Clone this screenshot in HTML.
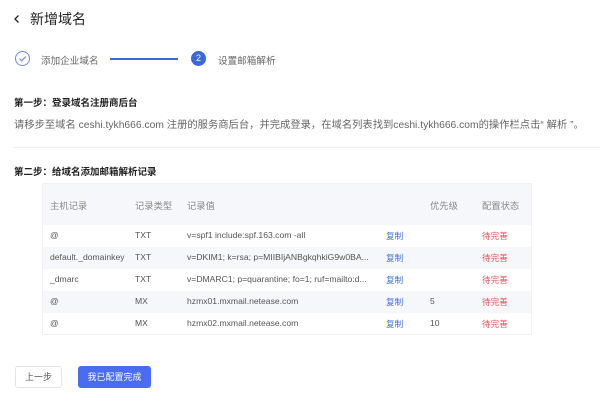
<!DOCTYPE html>
<html><head><meta charset="utf-8"><style>
*{margin:0;padding:0;box-sizing:border-box}
body{width:600px;height:400px;background:#fff;font-family:"Liberation Sans","Noto Sans CJK SC",sans-serif;color:#333;position:relative;overflow:hidden}
.a{position:absolute;white-space:nowrap}
.tb{position:absolute;left:42px;top:183px;width:490px;height:152px;border:1px solid #f0f1f4}
.row{position:absolute;left:0;width:488px;height:22px;font-size:8.6px;color:#555}
.row span{position:absolute;top:5px}
.g{background:#f6f7fa}
.cp{color:#3f6fd8}
.st{color:#e0545a}
</style></head><body>
<svg class="a" style="left:13px;top:14px" width="8" height="10"><path d="M5.5 1.5 L2 5 L5.5 8.5" fill="none" stroke="#222" stroke-width="1.3"/></svg>
<div class="a" style="left:30px;top:9px;font-size:14px;color:#222">新增域名</div>
<div class="a" style="left:15px;top:51px;width:15px;height:15px;border:1px solid #6a8ad6;border-radius:50%"></div>
<svg class="a" style="left:15px;top:51px" width="15" height="15"><path d="M4.5 7.5 L6.8 9.8 L10.8 5.5" fill="none" stroke="#6a8ad6" stroke-width="1.1"/></svg>
<div class="a" style="left:41px;top:53px;font-size:9.6px;color:#666">添加企业域名</div>
<div class="a" style="left:110px;top:58px;width:68px;height:1.5px;background:#3a66d6"></div>
<div class="a" style="left:191px;top:51px;width:15px;height:15px;background:#3a66e0;border-radius:50%;color:#fff;font-size:9px;text-align:center;line-height:15px">2</div>
<div class="a" style="left:218px;top:53px;font-size:9.6px;color:#666">设置邮箱解析</div>
<div class="a" style="left:14px;top:95px;font-size:9.5px;font-weight:bold;color:#222">第一步：登录域名注册商后台</div>
<div class="a" style="left:14px;top:116px;font-size:10.3px;color:#666">请移步至域名 ceshi.tykh666.com 注册的服务商后台，并完成登录，在域名列表找到ceshi.tykh666.com的操作栏点击“ 解析 ”。</div>
<div class="a" style="left:14px;top:147px;width:586px;height:1px;background:#eee"></div>
<div class="a" style="left:14px;top:164px;font-size:9.5px;font-weight:bold;color:#222">第二步：给域名添加邮箱解析记录</div>
<div class="tb">
<div class="row g" style="top:0;height:41px;color:#888;font-size:9.3px"><span style="left:7px;top:14px">主机记录</span><span style="left:92px;top:14px">记录类型</span><span style="left:144px;top:14px">记录值</span><span style="left:387px;top:14px">优先级</span><span style="left:439px;top:14px">配置状态</span></div>
<div class="row" style="top:41px"><span style="left:7px">@</span><span style="left:92px">TXT</span><span style="left:144px">v=spf1 include:spf.163.com -all</span><span class="cp" style="left:343px">复制</span><span class="st" style="left:439px">待完善</span></div>
<div class="row g" style="top:63px"><span style="left:7px">default._domainkey</span><span style="left:92px">TXT</span><span style="left:144px">v=DKIM1; k=rsa; p=MIIBIjANBgkqhkiG9w0BA...</span><span class="cp" style="left:343px">复制</span><span class="st" style="left:439px">待完善</span></div>
<div class="row" style="top:85px"><span style="left:7px">_dmarc</span><span style="left:92px">TXT</span><span style="left:144px">v=DMARC1; p=quarantine; fo=1; ruf=mailto:d...</span><span class="cp" style="left:343px">复制</span><span class="st" style="left:439px">待完善</span></div>
<div class="row g" style="top:107px"><span style="left:7px">@</span><span style="left:92px">MX</span><span style="left:144px">hzmx01.mxmail.netease.com</span><span class="cp" style="left:343px">复制</span><span style="left:387px">5</span><span class="st" style="left:439px">待完善</span></div>
<div class="row" style="top:129px"><span style="left:7px">@</span><span style="left:92px">MX</span><span style="left:144px">hzmx02.mxmail.netease.com</span><span class="cp" style="left:343px">复制</span><span style="left:387px">10</span><span class="st" style="left:439px">待完善</span></div>
</div>
<div class="a" style="left:15px;top:366px;width:47px;height:22px;border:1px solid #e3e3e3;border-radius:3px;font-size:9px;color:#555;text-align:center;line-height:20px">上一步</div>
<div class="a" style="left:78px;top:366px;width:73px;height:22px;background:#4a6cf0;border-radius:3px;font-size:9px;color:#fff;text-align:center;line-height:22px">我已配置完成</div>
</body></html>
